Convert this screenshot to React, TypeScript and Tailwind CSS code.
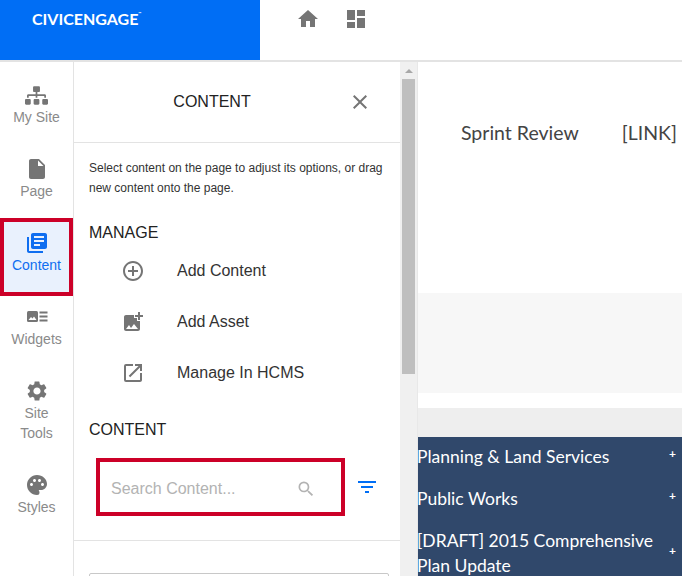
import type { ReactNode } from "react";
import {
  MdAddCircleOutline,
  MdAddPhotoAlternate,
  MdClose,
  MdDashboard,
  MdFilterList,
  MdHome,
  MdInsertDriveFile,
  MdLibraryBooks,
  MdOpenInNew,
  MdPalette,
  MdSearch,
  MdSettings,
} from "react-icons/md";
import { FaSitemap } from "react-icons/fa";

function WidgetsIcon() {
  return (
    <svg width="24" height="24" viewBox="0 0 24 24" fill="#757575">
      <path d="M2 7.5A1.5 1.5 0 0 1 3.5 6h8A1.5 1.5 0 0 1 13 7.5v8a1.5 1.5 0 0 1-1.5 1.5h-8A1.5 1.5 0 0 1 2 15.5z" />
      <path d="M3.5 15l2.5-3 1.5 1.5 1.5-2 2.5 3.5z" fill="#fff" />
      <rect x="14.5" y="6.5" width="8" height="2" />
      <rect x="14.5" y="10.5" width="8" height="2" />
      <rect x="14.5" y="14.5" width="8" height="2" />
    </svg>
  );
}

function RailItem({ icon, label, active }: { icon: ReactNode; label: ReactNode; active?: boolean }) {
  return (
    <div className={`relative flex flex-col items-center text-[14px] leading-5 ${active ? "text-[#0f6ef0]" : "text-[#8a8a8a]"}`}>
      {active && (
        <div className="absolute left-0 right-0 top-[-13px] h-[78px] border-4 border-[#cc0028] bg-[#e9f1fd]" />
      )}
      <div className="relative flex h-6 items-center justify-center">{icon}</div>
      <div className="relative text-center">{label}</div>
    </div>
  );
}

function ManageRow({ icon, label }: { icon: ReactNode; label: string }) {
  return (
    <div className="flex h-[51px] shrink-0 items-center">
      <div className="flex w-[103px] justify-center pl-[15px]">{icon}</div>
      <span className="text-[16px] text-[#333]">{label}</span>
    </div>
  );
}

function MenuRow({ children }: { children: ReactNode }) {
  return (
    <div className="flex items-center justify-between pr-[6px] text-[17.5px] leading-[25px] text-white">
      <div className="-ml-px">{children}</div>
      <span className="mb-[5px] text-[12px] leading-3 font-bold">+</span>
    </div>
  );
}

export default function App() {
  return (
    <div className="flex h-[576px] w-[682px] flex-col overflow-hidden bg-white font-['Liberation_Sans',sans-serif]">
      {/* Top bar */}
      <div className="flex h-[62px] shrink-0 border-b-2 border-[#e3e3e3]">
        <div className="flex h-full w-[260px] items-start bg-[#006ef5] pl-8 pt-[9px] font-['Lato',sans-serif] text-[16px] leading-5 font-bold text-white">
          CIVICENGAGE
          <span className="text-[4px] leading-[10px]">™</span>
        </div>
        <div className="flex items-start gap-6 pl-9 pt-[7px]">
          <MdHome size={24} color="#757575" />
          <MdDashboard size={24} color="#757575" />
        </div>
      </div>

      <div className="flex min-h-0 flex-1">
        {/* Icon rail */}
        <div className="flex w-[74px] shrink-0 flex-col gap-[30px] border-r border-[#e3e3e3] pt-[21px]">
          <RailItem icon={<FaSitemap size={23} color="#757575" />} label="My Site" />
          <RailItem icon={<MdInsertDriveFile size={24} color="#757575" />} label="Page" />
          <RailItem active icon={<MdLibraryBooks size={24} color="#0f6ef0" />} label="Content" />
          <RailItem icon={<WidgetsIcon />} label="Widgets" />
          <RailItem icon={<MdSettings size={24} color="#757575" />} label={<>Site<br />Tools</>} />
          <RailItem icon={<MdPalette size={24} color="#757575" />} label="Styles" />
        </div>

        {/* Content panel */}
        <div className="flex w-[326px] shrink-0 flex-col">
          <div className="flex h-[81px] shrink-0 items-center border-b border-[#e3e3e3] pb-px">
            <div className="w-[276px] text-center text-[16px] text-[#222]">CONTENT</div>
            <div className="-ml-[2px]">
              <MdClose size={24} color="#757575" />
            </div>
          </div>

          <div className="shrink-0 pl-[15px] pr-3 pt-[15px] text-[12px] leading-5 text-[#333]">
            Select content on the page to adjust its options, or drag new content onto the page.
          </div>
          <div className="mt-[25px] shrink-0 pl-[15px] text-[16px] leading-5 text-[#222]">MANAGE</div>
          <div className="mt-[2px] flex shrink-0 flex-col">
            <ManageRow icon={<MdAddCircleOutline size={24} color="#757575" />} label="Add Content" />
            <ManageRow icon={<MdAddPhotoAlternate size={24} color="#757575" />} label="Add Asset" />
            <ManageRow icon={<MdOpenInNew size={24} color="#757575" />} label="Manage In HCMS" />
          </div>
          <div className="mt-[22px] shrink-0 pl-[15px] text-[16px] leading-5 text-[#222]">CONTENT</div>

          <div className="mt-[18px] flex shrink-0 items-center pl-[22px]">
            <div className="flex h-[58px] w-[249px] items-center justify-between border-4 border-[#cc0028] pl-[11px] pr-[25px] pt-[3px] text-[16px] text-[#b3b3b3]">
              <span>Search Content...</span>
              <MdSearch size={20} color="#b3b3b3" />
            </div>
            <div className="ml-[10px]">
              <MdFilterList size={24} color="#006ef5" />
            </div>
          </div>

          <div className="mt-[24px] h-px shrink-0 bg-[#e3e3e3]" />
          <div className="ml-[15px] mt-[32px] h-10 w-[300px] shrink-0 rounded-[2px] border border-[#c8c8c8]" />
        </div>

        {/* Scrollbar */}
        <div className="flex w-[18px] shrink-0 flex-col border-r border-[#e8e8e8] bg-[#f0f0f0] pl-[2px] pr-[2px]">
          <div className="flex h-[17px] items-center justify-center">
            <div className="h-0 w-0 border-x-[4px] border-b-[4px] border-x-transparent border-b-[#a8a8a8]" />
          </div>
          <div className="h-[295px] w-[13px] bg-[#bfbfbf]" />
        </div>

        {/* Page preview */}
        <div className="flex min-w-0 flex-1 flex-col font-['Lato',sans-serif]">
          <div className="flex h-[231px] shrink-0 justify-between pl-[43px] pr-[5px] pt-[59px] text-[19.5px] leading-6 text-[#444]">
            <span>Sprint Review</span>
            <span>[LINK]</span>
          </div>
          <div className="h-[100px] shrink-0 bg-[#f7f7f7]" />
          <div className="mt-[15px] h-[29px] shrink-0 bg-[#eeeeee]" />
          <div className="flex flex-1 flex-col gap-[17px] bg-[#30486b] pt-[7px]">
            <MenuRow>Planning &amp; Land Services</MenuRow>
            <MenuRow>Public Works</MenuRow>
            <MenuRow>[DRAFT] 2015 Comprehensive<br />Plan Update</MenuRow>
          </div>
        </div>
      </div>
    </div>
  );
}
